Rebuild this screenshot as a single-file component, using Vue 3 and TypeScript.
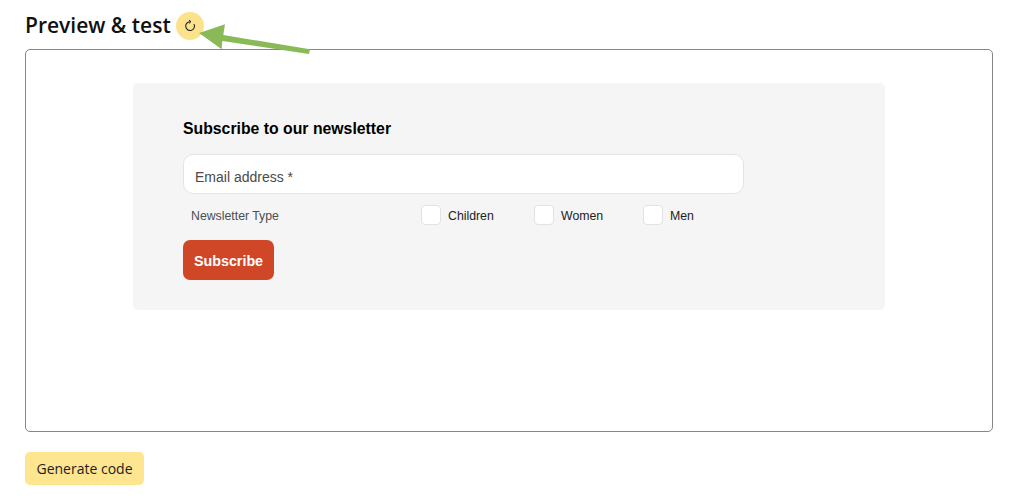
<template>
  <div class="page">
    <div class="heading">
      <h2>Preview &amp; test</h2>
      <button class="refresh" type="button" aria-label="Refresh">
        <svg width="12" height="12" viewBox="0 0 12 12" fill="none">
          <path d="M9.9 3.9A4.4 4.4 0 1 1 5.9 1.7" stroke="#222" stroke-width="1.1" />
          <path d="M4.9 0 L7 1.7 L4.9 3.4" stroke="#222" stroke-width="1" />
        </svg>
      </button>
    </div>

    <div class="preview">
      <form class="panel" @submit.prevent>
        <h3>Subscribe to our newsletter</h3>
        <div class="email">Email address *</div>
        <div class="types">
          <span class="types-label">Newsletter Type</span>
          <label v-for="t in types" :key="t.name" class="check" :class="t.cls">
            <span class="box"></span><span class="check-text">{{ t.name }}</span>
          </label>
        </div>
        <button class="subscribe" type="submit">Subscribe</button>
      </form>
    </div>

    <button class="generate" type="button">Generate code</button>

    <!-- annotation arrow sitting on top of the screenshot -->
    <svg class="arrow" width="1024" height="70" viewBox="0 0 1024 70">
      <path d="M309 54 L310 49.3 L223.3 35 L225 24.3 L199 33 L221.7 49.3 L222.3 41 Z" fill="#8aba57" />
    </svg>
  </div>
</template>

<script setup lang="ts">
interface NewsletterType {
  name: string
  cls: string
}

const types: NewsletterType[] = [
  { name: 'Children', cls: 'check--children' },
  { name: 'Women', cls: 'check--women' },
  { name: 'Men', cls: 'check--men' }
]
</script>

<style>
html,
body {
  margin: 0;
  background: #fff;
}
</style>

<style scoped>
.page {
  position: relative;
  width: 1024px;
  height: 503px;
  overflow: hidden;
  padding: 11px 25px 0;
  box-sizing: border-box;
  font-family: "Liberation Sans", Arial, sans-serif;
}

.heading {
  display: flex;
  align-items: center;
  gap: 5px;
  height: 30px;
}

.heading h2 {
  margin: 0;
  height: 30px;
  font-family: "Open Sans", "Noto Sans", sans-serif;
  font-size: 21px;
  font-weight: 600;
  line-height: 28px;
  color: #111;
}

.refresh {
  width: 28px;
  height: 28px;
  padding: 0;
  border: 0;
  border-radius: 50%;
  background: #fbe38e;
  display: flex;
  align-items: center;
  justify-content: center;
}

.preview {
  width: 968px;
  height: 383px;
  margin-top: 8px;
  box-sizing: border-box;
  border: 1px solid #85868a;
  border-radius: 5px;
  padding: 33px 107px 0;
  background: #fff;
}

.panel {
  width: 752px;
  height: 227px;
  box-sizing: border-box;
  padding: 37px 49px 0 50px;
  background: #f5f5f5;
  border-radius: 5px;
}

.panel h3 {
  margin: 0;
  font-size: 15.8px;
  font-weight: 700;
  line-height: 18px;
  color: #000;
}

.email {
  width: 561px;
  height: 40px;
  margin-top: 16px;
  box-sizing: border-box;
  padding-left: 11px;
  background: #fff;
  border: 1px solid #e4e4e4;
  border-radius: 10px;
  font-size: 14px;
  line-height: 45px;
  color: #4a4a4a;
}

.types {
  display: flex;
  align-items: center;
  height: 20px;
  margin-top: 11px;
  font-size: 12.3px;
}

.types-label {
  width: 238px;
  padding: 2px 0 0 8px;
  color: #4d4d4d;
  box-sizing: border-box;
  flex: none;
}

.check {
  display: flex;
  align-items: center;
  gap: 7px;
  color: #222;
  flex: none;
}

.check-text {
  padding-top: 2px;
}

.check--children {
  width: 113px;
}

.check--women {
  width: 109px;
}

.box {
  width: 20px;
  height: 20px;
  box-sizing: border-box;
  background: #fff;
  border: 1px solid #e2e2e2;
  border-radius: 4px;
}

.subscribe {
  display: block;
  width: 91px;
  height: 40px;
  margin-top: 15px;
  padding: 2px 0 0;
  border: 0;
  border-radius: 7px;
  background: #d04727;
  color: #fff;
  font-family: "Liberation Sans", Arial, sans-serif;
  font-size: 14.3px;
  font-weight: 700;
}

.generate {
  display: block;
  width: 119px;
  height: 33px;
  margin-top: 20px;
  padding: 0;
  border: 0;
  border-radius: 5px;
  background: #fde68f;
  color: #1c1c1c;
  font-family: "Open Sans", "Noto Sans", sans-serif;
  font-size: 14px;
}

.arrow {
  position: absolute;
  top: 0;
  left: 0;
  pointer-events: none;
}
</style>
